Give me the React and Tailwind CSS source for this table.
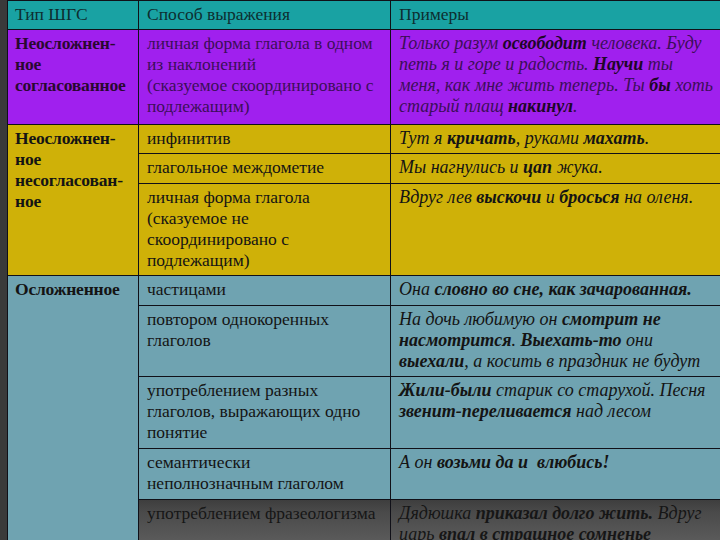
const cell = "border border-[#101018] px-2 pt-[3px] pb-[4px] align-top leading-[21px]";
const first = "border border-[#101018] pl-[7px] pr-1 pt-[3px] pb-[4px] align-top leading-[21px] font-bold tracking-[-0.2px] whitespace-nowrap";
const ex = cell + " italic text-[18px]";

export default function App() {
  return (
    <div className="w-[720px] h-[540px] overflow-hidden bg-[#3a3a3a] pl-[7px] font-['Liberation_Serif',serif] text-[17.5px] text-[#141414]">
      <table className="w-[745px] border-collapse table-fixed">
        <colgroup>
          <col className="w-[131px]" />
          <col className="w-[252px]" />
          <col />
        </colgroup>
        <tbody>
          {/* header */}
          <tr className="h-[28px] bg-[#19a2a3] text-[#0d2e30]">
            <td className={cell + " pl-[7px]"}>Тип ШГС</td>
            <td className={cell}>Способ выражения</td>
            <td className={cell}>Примеры</td>
          </tr>

          {/* неосложненное согласованное */}
          <tr className="h-[95px] bg-[#a020ee]">
            <td className={first + " text-[#2a0830]"}>
              Неосложнен-
              <br />
              ное
              <br />
              согласованное
            </td>
            <td className={cell + " text-[#3c0e58] whitespace-nowrap"}>
              личная форма глагола в одном
              <br />
              из наклонений
              <br />
              (сказуемое скоординировано с
              <br />
              подлежащим)
            </td>
            <td className={ex + " text-[#3c0e58] whitespace-nowrap"}>
              Только разум <b className="text-[#1e0628]">освободит</b> человека. Буду
              <br />
              петь я и горе и радость. <b className="text-[#1e0628]">Научи</b> ты
              <br />
              меня, как мне жить теперь. Ты <b className="text-[#1e0628]">бы</b> хоть
              <br />
              старый плащ <b className="text-[#1e0628]">накинул</b>.
            </td>
          </tr>

          {/* неосложненное несогласованное */}
          <tr className="h-[28px] bg-[#cfb108]">
            <td className={first} rowSpan={3}>
              Неосложнен-
              <br />
              ное
              <br />
              несогласован-
              <br />
              ное
            </td>
            <td className={cell}>инфинитив</td>
            <td className={ex}>
              Тут я <b>кричать</b>, руками <b>махать</b>.
            </td>
          </tr>
          <tr className="h-[30px] bg-[#cfb108]">
            <td className={cell}>глагольное междометие</td>
            <td className={ex}>
              Мы нагнулись и <b>цап</b> жука.
            </td>
          </tr>
          <tr className="h-[92px] bg-[#cfb108]">
            <td className={cell}>
              личная форма глагола
              <br />
              (сказуемое не
              <br />
              скоординировано с
              <br />
              подлежащим)
            </td>
            <td className={ex}>
              Вдруг лев <b>выскочи</b> и <b>бросься</b> на оленя.
            </td>
          </tr>

          {/* осложненное */}
          <tr className="h-[30px] bg-[#6fa3b1]">
            <td className={first} rowSpan={6}>
              Осложненное
            </td>
            <td className={cell}>частицами</td>
            <td className={ex}>
              Она <b>словно во сне, как зачарованная.</b>
            </td>
          </tr>
          <tr className="h-[71px] bg-[#6fa3b1]">
            <td className={cell}>
              повтором однокоренных
              <br />
              глаголов
            </td>
            <td className={ex + " whitespace-nowrap"}>
              На дочь любимую он <b>смотрит не</b>
              <br />
              <b>насмотрится</b>. <b>Выехать-то</b> они
              <br />
              <b>выехали</b>, а косить в праздник не будут
            </td>
          </tr>
          <tr className="h-[72px] bg-[#6fa3b1]">
            <td className={cell + " whitespace-nowrap"}>
              употреблением разных
              <br />
              глаголов, выражающих одно
              <br />
              понятие
            </td>
            <td className={ex + " whitespace-nowrap"}>
              <b>Жили-были</b> старик со старухой. Песня
              <br />
              <b>звенит-переливается</b> над лесом
            </td>
          </tr>
          <tr className="h-[51px] bg-[#6fa3b1]">
            <td className={cell}>
              семантически
              <br />
              неполнозначным глаголом
            </td>
            <td className={ex}>
              А он <b>возьми да и&nbsp; влюбись!</b>
            </td>
          </tr>
          <tr className="h-[60px] bg-[linear-gradient(to_bottom,#3e3e3e_0px,#4a4a4a_12px,#5a5a5a_40px)] text-[#161616]">
            <td className={cell + " whitespace-nowrap"}>употреблением фразеологизма</td>
            <td className={ex + " whitespace-nowrap"}>
              Дядюшка <b>приказал долго жить.</b> Вдруг
              <br />
              царь <b>впал в страшное сомненье</b>
            </td>
          </tr>
        </tbody>
      </table>
    </div>
  );
}
